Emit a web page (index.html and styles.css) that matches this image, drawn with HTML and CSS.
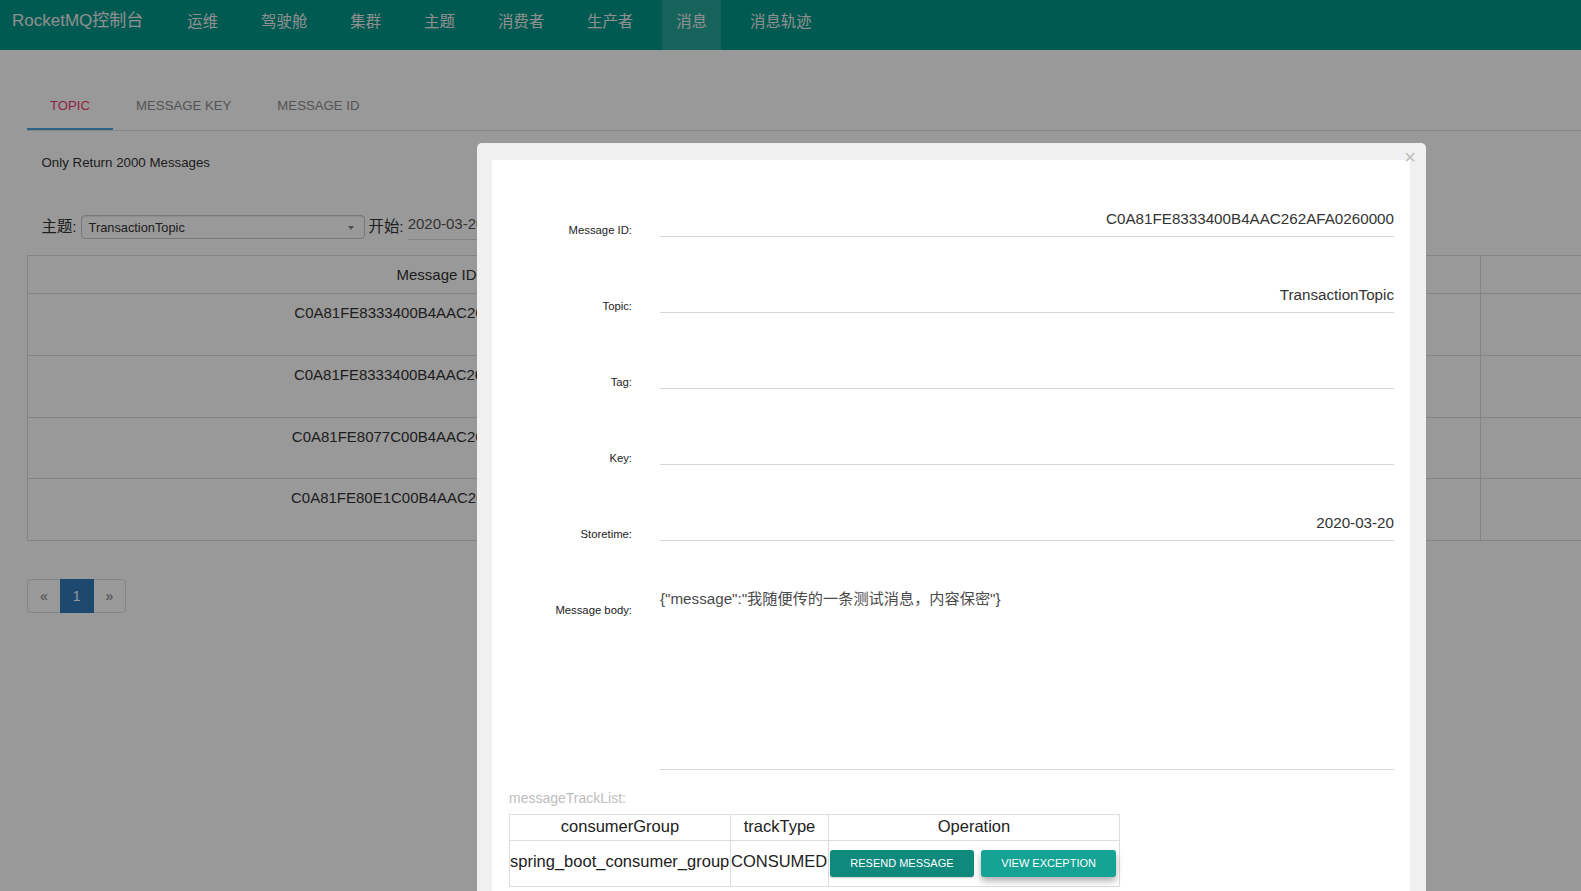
FILE: index.html
```html
<!DOCTYPE html>
<html lang="zh-CN">
<head>
<meta charset="utf-8">
<title>RocketMQ控制台</title>
<link rel="stylesheet" href="styles.css">
</head>
<body>
<header class="navbar">
  <div class="brand">RocketMQ控制台</div>
  <ul class="nav">
    <li><a href="#">运维</a></li>
    <li><a href="#">驾驶舱</a></li>
    <li><a href="#">集群</a></li>
    <li><a href="#">主题</a></li>
    <li><a href="#">消费者</a></li>
    <li><a href="#">生产者</a></li>
    <li class="active"><a href="#">消息</a></li>
    <li><a href="#">消息轨迹</a></li>
  </ul>
</header>

<main class="page">
  <div class="tabs">
    <div class="tab active">Topic</div>
    <div class="tab">Message Key</div>
    <div class="tab">Message ID</div>
  </div>
  <div class="tab-body">
    <p class="notice">Only Return 2000 Messages</p>
    <div class="query">
      <span class="q-label">主题:</span>
      <div class="select">TransactionTopic<span class="caret"></span></div>
      <span class="q-label q-gap">开始:</span>
      <div class="date-input">2020-03-20 00:00:00</div>
    </div>
  </div>
  <table class="msg-table">
    <colgroup>
      <col class="c-id"><col class="c-tag"><col class="c-key"><col class="c-time"><col>
    </colgroup>
    <thead>
      <tr><th>Message ID</th><th>Tag</th><th>Key</th><th>StoreTime</th><th></th></tr>
    </thead>
    <tbody>
      <tr><td>C0A81FE8333400B4AAC262AFA0260000</td><td></td><td></td><td>2020-03-20</td><td></td></tr>
      <tr><td>C0A81FE8333400B4AAC262B0F4E80001</td><td></td><td></td><td>2020-03-20</td><td></td></tr>
      <tr><td>C0A81FE8077C00B4AAC262A95D6A0000</td><td></td><td></td><td>2020-03-20</td><td></td></tr>
      <tr><td>C0A81FE80E1C00B4AAC262AA3C180000</td><td></td><td></td><td>2020-03-20</td><td></td></tr>
    </tbody>
  </table>
  <ul class="pagination">
    <li class="disabled"><a href="#">&laquo;</a></li>
    <li class="current"><a href="#">1</a></li>
    <li class="disabled"><a href="#">&raquo;</a></li>
  </ul>
</main>

<div class="overlay">
  <div class="dialog">
    <button class="close" type="button">&times;</button>
    <div class="dialog-body">
      <div class="form-row">
        <label>Message ID:</label>
        <div class="field">C0A81FE8333400B4AAC262AFA0260000</div>
      </div>
      <div class="form-row">
        <label>Topic:</label>
        <div class="field">TransactionTopic</div>
      </div>
      <div class="form-row">
        <label>Tag:</label>
        <div class="field"></div>
      </div>
      <div class="form-row">
        <label>Key:</label>
        <div class="field"></div>
      </div>
      <div class="form-row">
        <label>Storetime:</label>
        <div class="field">2020-03-20</div>
      </div>
      <div class="form-row">
        <label>Message body:</label>
        <div class="field area">{"message":"我随便传的一条测试消息，内容保密"}</div>
      </div>
      <div class="track">
        <div class="track-title">messageTrackList:</div>
        <table class="track-table">
          <colgroup><col class="t1"><col class="t2"><col class="t3"></colgroup>
          <thead>
            <tr><th>consumerGroup</th><th>trackType</th><th>Operation</th></tr>
          </thead>
          <tbody>
            <tr>
              <td class="left">spring_boot_consumer_group</td>
              <td class="left">CONSUMED</td>
              <td>
                <div class="ops">
                  <button class="btn btn-dark" type="button">Resend Message</button>
                  <button class="btn btn-raised" type="button">View Exception</button>
                </div>
              </td>
            </tr>
          </tbody>
        </table>
      </div>
    </div>
  </div>
</div>
</body>
</html>
```

FILE: styles.css
```css
html, body {
  margin: 0;
  padding: 0;
  height: 100%;
  overflow: hidden;
}

body {
  font-family: "Liberation Sans", Arial, "Noto Sans CJK SC", sans-serif;
  color: #333;
  background: #fff;
}

/* ---------- navbar ---------- */
.navbar {
  height: 50px;
  background: #009688;
  display: flex;
  align-items: flex-start;
}

.brand {
  margin-left: 12px;
  margin-right: 30px;
  padding-top: 11px;
  font-size: 17px;
  line-height: 20px;
  color: #eeeeee;
  white-space: nowrap;
}

.nav {
  display: flex;
  gap: 15px;
  list-style: none;
  margin: 0;
  padding: 0;
}

.nav a {
  display: block;
  height: 50px;
  box-sizing: border-box;
  padding: 12px 14px 0;
  font-size: 15.4px;
  line-height: 20px;
  color: #eeeeee;
  text-decoration: none;
  white-space: nowrap;
}

.nav .active a {
  background: rgba(255, 255, 255, 0.15);
}

/* ---------- page ---------- */
.page {
  margin-left: 27px;
  width: 1555px;
}

.tabs {
  margin-top: 32px;
  height: 48px;
  display: flex;
  border-bottom: 1px solid #e0e0e0;
}

.tab {
  height: 48px;
  box-sizing: border-box;
  padding: 15px 23px 0;
  font-size: 13.2px;
  line-height: 18px;
  text-transform: uppercase;
  color: #8c8c8c;
  white-space: nowrap;
}

.tab.active {
  color: #f03a6e;
  border-bottom: 2px solid #4aa3db;
}

.tab-body {
  padding-left: 14.5px;
}

.notice {
  margin: 23px 0 0;
  font-size: 13.3px;
  line-height: 18px;
  color: #333;
}

.query {
  margin-top: 43px;
  height: 24px;
  display: flex;
  align-items: flex-start;
}

.q-label {
  font-size: 15.4px;
  line-height: 24px;
  color: #333;
}

.q-gap {
  margin-left: 4px;
}

.select {
  position: relative;
  margin-left: 4px;
  width: 284px;
  height: 24px;
  box-sizing: border-box;
  border: 1px solid #c8c8c8;
  border-radius: 4px;
  padding-left: 7px;
  font-size: 12.8px;
  line-height: 23px;
  color: #333;
  box-shadow: inset 0 1px 1px rgba(0, 0, 0, 0.08);
}

.caret {
  position: absolute;
  right: 10px;
  top: 10px;
  width: 0;
  height: 0;
  border-left: 3px solid transparent;
  border-right: 3px solid transparent;
  border-top: 4px solid #888;
}

.date-input {
  margin-left: 4px;
  margin-top: -1px;
  width: 200px;
  height: 26px;
  box-sizing: border-box;
  font-size: 15px;
  line-height: 20px;
  color: #555;
  border-bottom: 1px solid #ddd;
  white-space: nowrap;
  overflow: hidden;
}

/* ---------- message table ---------- */
.msg-table {
  margin-top: 16px;
  width: 1555px;
  table-layout: fixed;
  border-collapse: separate;
  border-spacing: 0;
  border-top: 1px solid #ddd;
  border-left: 1px solid #ddd;
}

.c-id { width: 818px; }
.c-tag { width: 212px; }
.c-key { width: 212px; }
.c-time { width: 211px; }

.msg-table th,
.msg-table td {
  box-sizing: border-box;
  border-right: 1px solid #ddd;
  border-bottom: 1px solid #ddd;
  padding: 8px 8px 0;
  font-size: 15px;
  line-height: 22px;
  font-weight: normal;
  text-align: center;
  vertical-align: top;
  color: #333;
  white-space: nowrap;
  overflow: hidden;
}

.msg-table th { height: 38px; }
.msg-table td { height: 62px; }
.msg-table tbody tr:nth-child(2) td,
.msg-table tbody tr:nth-child(3) td { height: 61.5px; }

.pagination {
  display: flex;
  list-style: none;
  margin: 38px 0 0;
  padding: 0;
}

.pagination a {
  display: block;
  padding: 6px 12px;
  margin-left: -1px;
  font-size: 14px;
  line-height: 20px;
  color: #777;
  background: #fff;
  border: 1px solid #ddd;
  text-decoration: none;
}

.pagination li:first-child a {
  margin-left: 0;
  border-radius: 4px 0 0 4px;
}

.pagination li:last-child a {
  border-radius: 0 4px 4px 0;
}

.pagination .current a {
  position: relative;
  color: #fff;
  background: #337ab7;
  border-color: #337ab7;
}

/* ---------- overlay + dialog ---------- */
.overlay {
  position: fixed;
  inset: 0;
  background: rgba(0, 0, 0, 0.4);
}

.dialog {
  position: absolute;
  left: 477px;
  top: 143px;
  width: 949px;
  box-sizing: border-box;
  padding: 17px 16px 16px 15px;
  background: #f0f0f0;
  border-radius: 5px;
}

.close {
  position: absolute;
  top: 4px;
  right: 10px;
  padding: 0;
  border: 0;
  background: none;
  font-family: "Liberation Sans", Arial, sans-serif;
  font-size: 20px;
  line-height: 20px;
  color: #bbb;
  cursor: pointer;
}

.dialog-body {
  background: #fff;
  padding: 47px 16px 40px 0;
}

.form-row {
  display: grid;
  grid-template-columns: 140px 1fr;
  column-gap: 28px;
  margin-top: 46px;
}

.form-row:first-child {
  margin-top: 0;
}

.form-row label {
  padding-top: 16px;
  font-size: 11.3px;
  line-height: 14px;
  text-align: right;
  color: #222;
}

.field {
  height: 30px;
  box-sizing: border-box;
  padding-top: 3px;
  border-bottom: 1px solid #d6d6d6;
  font-size: 15.2px;
  line-height: 18px;
  text-align: right;
  color: #333;
  white-space: nowrap;
}

.field.area {
  height: 183px;
  text-align: left;
  color: #4a4a4a;
}

.track {
  padding-left: 17px;
}

.track-title {
  margin-top: 17.5px;
  font-size: 14px;
  line-height: 20px;
  color: #bdbdbd;
}

.track-table {
  margin-top: 6px;
  table-layout: fixed;
  width: 611px;
  border-collapse: separate;
  border-spacing: 0;
  border-top: 1px solid #ddd;
  border-left: 1px solid #ddd;
}

.t1 { width: 221px; }
.t2 { width: 98px; }
.t3 { width: 291px; }

.track-table th,
.track-table td {
  box-sizing: border-box;
  padding: 0;
  border-right: 1px solid #ddd;
  border-bottom: 1px solid #ddd;
  font-size: 16.5px;
  font-weight: normal;
  color: #222;
  white-space: nowrap;
  vertical-align: middle;
}

.track-table th {
  height: 26px;
  padding-bottom: 3px;
  line-height: 20px;
  text-align: center;
}

.track-table td {
  height: 46px;
  line-height: 22px;
}

.track-table td.left {
  padding-bottom: 4px;
  text-align: left;
}

.ops {
  display: flex;
  gap: 7px;
  padding-left: 1px;
}

.btn {
  height: 27px;
  padding: 0 20.3px;
  border: 0;
  border-radius: 3px;
  font-family: "Liberation Sans", Arial, sans-serif;
  font-size: 11px;
  line-height: 27px;
  text-transform: uppercase;
  color: #fff;
  white-space: nowrap;
  cursor: pointer;
}

.btn-dark {
  background: #10897d;
  box-shadow: 0 1px 2px rgba(0, 0, 0, 0.2);
}

.btn-raised {
  background: #14a395;
  box-shadow: 0 4px 7px rgba(0, 0, 0, 0.32);
}
```
